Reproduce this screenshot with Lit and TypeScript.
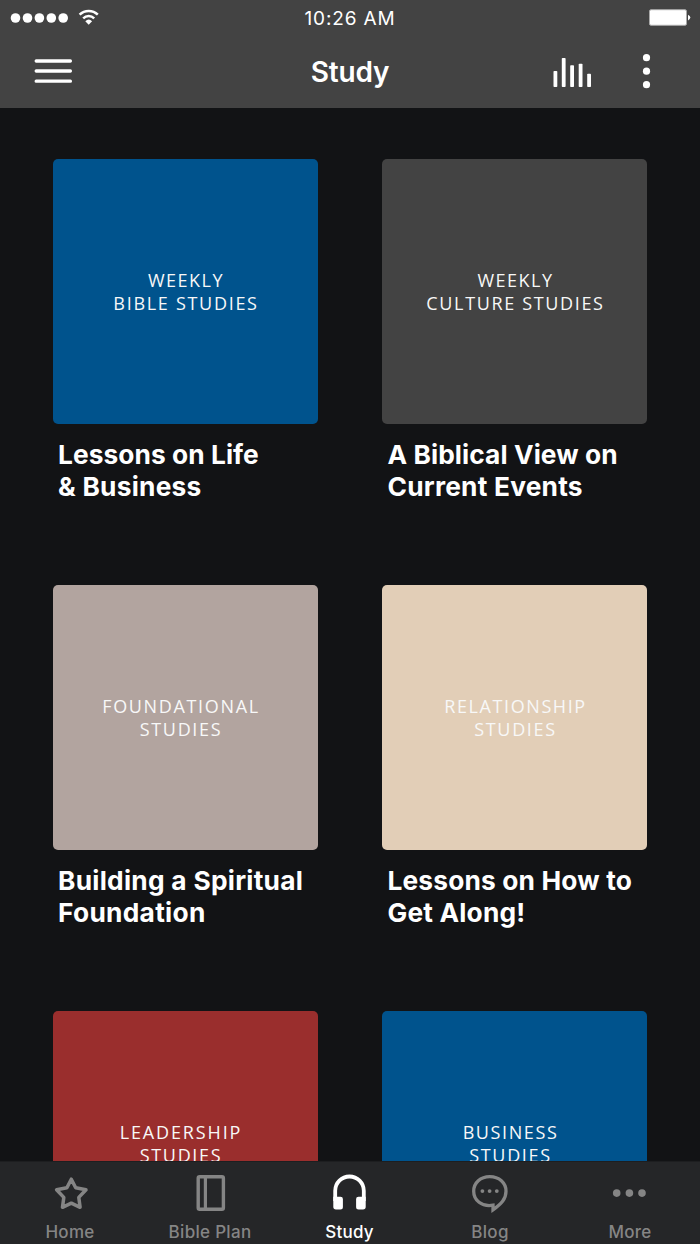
import { LitElement, html, css, svg } from "lit";
import { customElement, property } from "lit/decorators.js";
import { classMap } from "lit/directives/class-map.js";

interface Line { text: string; spacing: number; }
interface Study { tone: string; nudged?: boolean; label: Line[]; title: Line[]; }

const studies: Study[] = [
  { tone: "blue", label: [{ text: "WEEKLY", spacing: 1.5 }, { text: "BIBLE STUDIES", spacing: 1.7 }],
    title: [{ text: "Lessons on Life", spacing: 0.07 }, { text: "& Business", spacing: 0.25 }] },
  { tone: "gray", label: [{ text: "WEEKLY", spacing: 1.5 }, { text: "CULTURE STUDIES", spacing: 1.65 }],
    title: [{ text: "A Biblical View on", spacing: 0.08 }, { text: "Current Events", spacing: 0.22 }] },
  { tone: "mauve", nudged: true, label: [{ text: "FOUNDATIONAL", spacing: 1.65 }, { text: "STUDIES", spacing: 1.65 }],
    title: [{ text: "Building a Spiritual", spacing: 0.27 }, { text: "Foundation", spacing: 0.3 }] },
  { tone: "sand", label: [{ text: "RELATIONSHIP", spacing: 1.6 }, { text: "STUDIES", spacing: 1.65 }],
    title: [{ text: "Lessons on How to", spacing: 0.17 }, { text: "Get Along!", spacing: 0.18 }] },
  { tone: "red", nudged: true, label: [{ text: "LEADERSHIP", spacing: 1.85 }, { text: "STUDIES", spacing: 1.65 }], title: [] },
  { tone: "blue", nudged: true, label: [{ text: "BUSINESS", spacing: 1.6 }, { text: "STUDIES", spacing: 1.65 }], title: [] },
];

const line = (l: Line) => html`<span class="line" style="letter-spacing:${l.spacing}px">${l.text}</span>`;

@customElement("study-card")
class StudyCard extends LitElement {
  @property({ attribute: false }) study!: Study;

  static styles = css`
    :host { display: block; }
    .cover {
      box-sizing: border-box; height: 265px; border-radius: 5px; padding: 110px 0 0 2px;
      display: flex; flex-direction: column; align-items: center;
      font: 400 18px/22.7px "Open Sans", sans-serif; color: #f8f8f8; text-align: center;
    }
    .nudged { padding: 110px 8px 0 0; }
    .cover .line { white-space: nowrap; }
    .blue { background: #00538d; }
    .gray { background: #434343; }
    .mauve { background: #b2a49f; }
    .sand { background: #e2ceb7; }
    .red { background: #9a2e2d; }
    .title {
      display: flex; flex-direction: column; margin: 14.5px 0 0 5.5px;
      font: 700 26.3px/32px Inter, sans-serif; color: #fff; white-space: nowrap;
    }
  `;

  render() {
    return html`
      <div class=${classMap({ cover: true, nudged: !!this.study.nudged, [this.study.tone]: true })}>${this.study.label.map(line)}</div>
      <div class="title">${this.study.title.map(line)}</div>`;
  }
}

const tabs = [
  { name: "Home", icon: svg`<path d="M21.3 6.2l4.4 8.6 10.3 2-7.2 7.6 1.3 9.9-8.8-4.1-8.8 4.1 1.3-9.9-7.2-7.6 10.3-2z" fill="none" stroke="currentColor" stroke-width="3.5" stroke-linejoin="round"/>` },
  { name: "Bible Plan", icon: svg`<rect x="8.2" y="3.8" width="25.2" height="32.4" rx="1.5" fill="none" stroke="currentColor" stroke-width="3.4"/><path d="M15.4 3.8v32.4" stroke="currentColor" stroke-width="3.2"/>` },
  { name: "Study", icon: svg`<path d="M5.2 28V17.8a14.3 14.3 0 0 1 28.6 0V28" fill="none" stroke="currentColor" stroke-width="3.8"/><path d="M3.3 23.7h7.2q2.4 0 2.4 2.4v7.8q0 2.5-2.5 2.5H6q-2.7 0-2.7-2.7zM35.7 23.7h-7.2q-2.4 0-2.4 2.4v7.8q0 2.5 2.5 2.5H33q2.7 0 2.7-2.7z" fill="currentColor"/>` },
  { name: "Blog", icon: svg`<path d="M23 36.8V32.2C11.5 34.1 3.7 27 3.7 18.2 3.7 9.8 10.5 3.7 19.8 3.7S36 9.8 36 18.2c0 7.5-4.3 12.4-13 18.6z" fill="none" stroke="currentColor" stroke-width="3.3"/><circle cx="12.4" cy="18.1" r="1.9" fill="currentColor"/><circle cx="19.6" cy="18.1" r="1.9" fill="currentColor"/><circle cx="26.8" cy="18.1" r="1.9" fill="currentColor"/>` },
  { name: "More", icon: svg`<circle cx="6.7" cy="20.1" r="3.8" fill="currentColor"/><circle cx="19.4" cy="20.1" r="3.8" fill="currentColor"/><circle cx="32" cy="20.1" r="3.8" fill="currentColor"/>` },
];

@customElement("app-root")
class AppRoot extends LitElement {
  static styles = css`
    :host {
      display: flex; flex-direction: column; width: 700px; height: 1244px; overflow: hidden;
      background: #121315; color: #fff; font-family: Inter, sans-serif;
    }
    svg { display: block; }
    .top { flex: none; height: 108px; background: #434343; }
    .status, .nav { display: grid; grid-template-columns: 1fr auto 1fr; align-items: center; }
    .status { height: 35px; }
    .clock { font-size: 19px; line-height: 35px; height: 34px; padding-top: 1px; letter-spacing: 0.85px; }
    .nav { height: 73px; }
    .heading { font-size: 28px; font-weight: 600; line-height: 73px; letter-spacing: -0.2px; padding-top: 1px; height: 72px; }
    .right { justify-self: end; }
    .content {
      flex: 1; min-height: 0; overflow: hidden; padding: 51px 52.5px 0;
      display: grid; grid-template-columns: 265px 265px; grid-auto-rows: 426px; column-gap: 64.5px;
      align-content: start; box-sizing: border-box;
    }
    .tabs {
      flex: none; height: 83px; box-sizing: border-box; background: #252628; border-top: 1px solid #1d1e20;
      display: grid; grid-template-columns: repeat(5, 1fr);
    }
    .tab {
      display: flex; flex-direction: column; align-items: center; padding-top: 11px; box-sizing: border-box;
      color: #858585; font-size: 17px; font-weight: 450; line-height: 20px; letter-spacing: 0.3px; white-space: nowrap;
    }
    .tab span { margin-top: 9px; }
    .active { color: #fff; font-weight: 500; letter-spacing: 0.2px; }
    .active span { padding-right: 1px; }
  `;

  render() {
    return html`
      <header class="top">
        <div class="status">
          <svg width="110" height="35" viewBox="0 0 110 35" fill="#fff">
            ${[15.5, 27.5, 39.4, 51.3, 63.2].map((x) => svg`<circle cx=${x} cy="18" r="4.8"/>`)}
            <g fill="none" stroke="#fff" stroke-width="2.5"><path d="M79.6 14.6a13 13 0 0 1 18.2 0M83.2 18.3a8 8 0 0 1 11 0"/></g>
            <path d="M88.7 24.8l-3.4-3.6a5 5 0 0 1 6.8 0z"/>
          </svg>
          <div class="clock">10:26 AM</div>
          <svg class="right" width="60" height="35" viewBox="0 0 60 35">
            <rect x="9.5" y="9.7" width="37" height="15.6" rx="1.5" fill="#fff" stroke="#aaa"/>
            <path d="M48 14.8q2.3 1 2.3 2.8T48 20.4z" fill="#fff"/>
          </svg>
        </div>
        <div class="nav">
          <svg width="110" height="73" viewBox="0 0 110 73"><path d="M36.2 26h34.2M36.2 36h34.2M36.2 46.2h34.2" stroke="#fff" stroke-width="3.3" stroke-linecap="round"/></svg>
          <div class="heading">Study</div>
          <svg class="right" width="160" height="73" viewBox="0 0 160 73" fill="#fff">
            <rect x="13.5" y="36" width="3.8" height="16" rx=".8"/><rect x="21.8" y="23" width="3.8" height="29" rx=".8"/>
            <rect x="30.2" y="30.3" width="3.8" height="21.7" rx=".8"/><rect x="38.7" y="28.7" width="3.8" height="23.3" rx=".8"/>
            <rect x="47.2" y="38.8" width="3.8" height="13.2" rx=".8"/>
            <circle cx="106.5" cy="22.7" r="3.6"/><circle cx="106.5" cy="36.2" r="3.6"/><circle cx="106.5" cy="49.7" r="3.6"/>
          </svg>
        </div>
      </header>
      <main class="content">${studies.map((s) => html`<study-card .study=${s}></study-card>`)}</main>
      <nav class="tabs">
        ${tabs.map((t) => html`<div class=${classMap({ tab: true, active: t.name === "Study" })}>
          <svg width="40" height="40" viewBox="0 0 40 40">${t.icon}</svg><span>${t.name}</span>
        </div>`)}
      </nav>`;
  }
}
